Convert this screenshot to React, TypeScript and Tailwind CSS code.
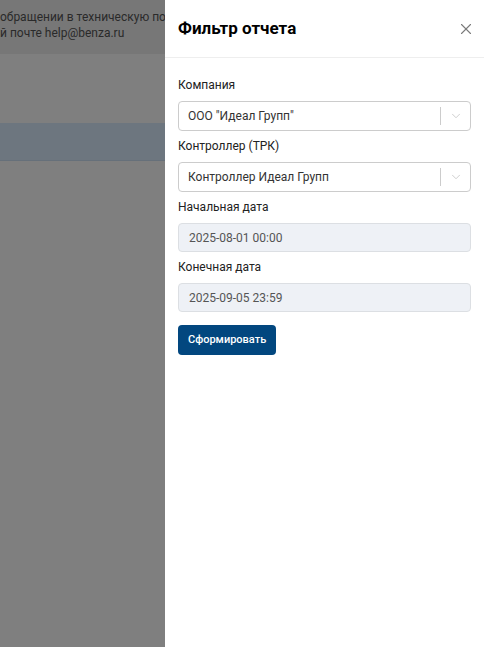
import { X, ChevronDown } from 'lucide-react';

function SelectBox({ value }: { value: string }) {
  return (
    <div className="flex h-[30px] items-center rounded-[4px] border border-[#cccccc] bg-white">
      <span className="flex-1 truncate pl-[9px] text-[12px] text-[#333333]">{value}</span>
      <span className="h-[18px] w-px bg-[#cccccc]" />
      <span className="flex w-[29px] items-center justify-center text-[#c4c4c4]">
        <ChevronDown className="h-[14px] w-[14px]" strokeWidth={1.4} />
      </span>
    </div>
  );
}

function DateBox({ value }: { value: string }) {
  return (
    <div className="flex h-[29px] items-center rounded-[4px] border border-[#dcdfe3] bg-[#eef1f6] pl-[10px] text-[12px] text-[#555555]">
      {value}
    </div>
  );
}

function Label({ children }: { children: string }) {
  return <div className="mb-[7px] h-[18px] text-[12px] leading-[18px] text-[#222222]">{children}</div>;
}

export default function App() {
  return (
    <div
      className="relative h-[647px] w-[484px] overflow-hidden bg-white"
      style={{ fontFamily: 'Roboto, "Open Sans", sans-serif' }}
    >
      {/* page underneath */}
      <div className="h-[54px] bg-[#eeeeee] pt-[9px] text-[12px] leading-[16px] text-[#555555]">
        <div className="whitespace-nowrap">обращении в техническую под</div>
        <div className="whitespace-nowrap">й почте help@benza.ru</div>
      </div>
      <div className="h-[69px]" />
      <div className="h-[38px] border-b border-[#cde0f4] bg-[#dbedff]" />

      {/* overlay */}
      <div className="absolute inset-0 bg-black/50" />

      {/* drawer */}
      <div className="absolute right-0 top-0 flex h-full w-[319px] flex-col bg-white">
        <div className="flex h-[58px] items-center justify-between border-b border-[#eeeeee] pl-[13px] pr-[9px]">
          <h2 className="text-[17px] font-bold text-black">Фильтр отчета</h2>
          <button type="button" className="text-[#7a7a7a]" aria-label="Закрыть">
            <X className="h-[18px] w-[18px]" strokeWidth={1.5} />
          </button>
        </div>

        <div className="px-[13px] pt-[18px]">
          <Label>Компания</Label>
          <div className="mb-[6px]">
            <SelectBox value={'ООО "Идеал Групп"'} />
          </div>
          <Label>Контроллер (ТРК)</Label>
          <div className="mb-[6px]">
            <SelectBox value="Контроллер Идеал Групп" />
          </div>
          <Label>Начальная дата</Label>
          <div className="mb-[6px]">
            <DateBox value="2025-08-01 00:00" />
          </div>
          <Label>Конечная дата</Label>
          <DateBox value="2025-09-05 23:59" />
          <button
            type="button"
            className="mt-[13px] h-[30px] rounded-[4px] bg-[#02477f] px-[10px] text-[11px] font-medium text-white"
          >
            Сформировать
          </button>
        </div>
      </div>
    </div>
  );
}
